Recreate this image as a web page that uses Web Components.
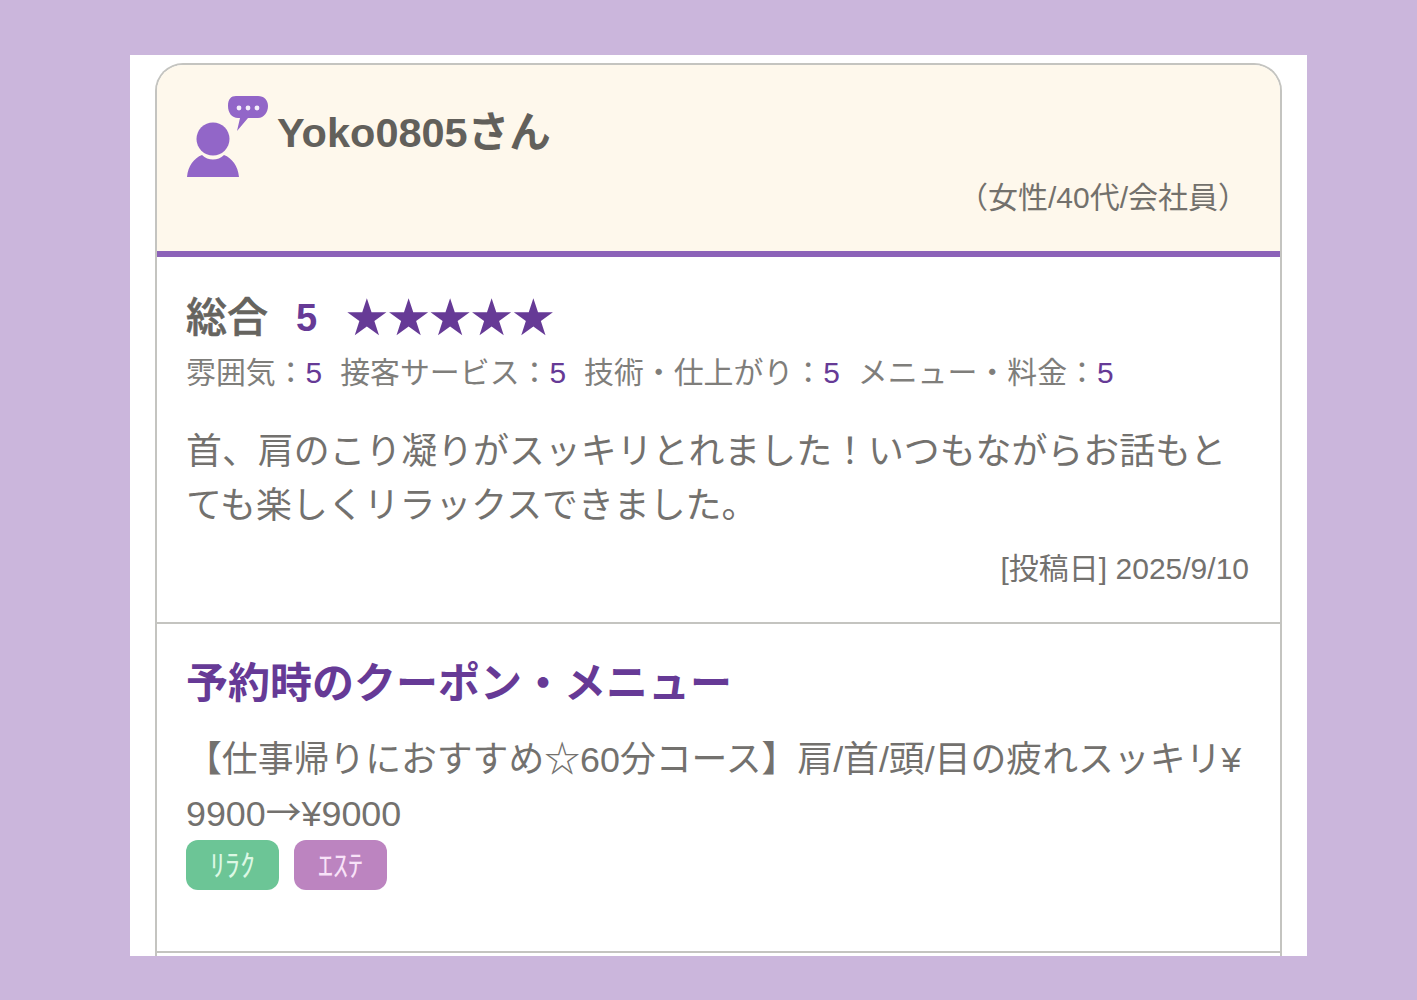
<!DOCTYPE html>
<html lang="ja">
<head>
<meta charset="utf-8">
<title>口コミ</title>
<style>
  html, body { margin: 0; padding: 0; }
  body {
    background: #cbb6dc;
    font-family: "Liberation Sans", "Noto Sans CJK JP", sans-serif;
    color: #6e6e6c;
  }
</style>
</head>
<body>
<review-page>
  <review-header name="Yoko0805さん" profile="（女性/40代/会社員）"></review-header>
  <review-body total="5" date="[投稿日] 2025/9/10">
    <review-score slot="scores" label="雰囲気：" value="5"></review-score>
    <review-score slot="scores" label="接客サービス：" value="5"></review-score>
    <review-score slot="scores" label="技術・仕上がり：" value="5"></review-score>
    <review-score slot="scores" label="メニュー・料金：" value="5"></review-score>
    首、肩のこり凝りがスッキリとれました！いつもながらお話もとても楽しくリラックスできました。
  </review-body>
  <review-coupon heading="予約時のクーポン・メニュー">
    【仕事帰りにおすすめ☆60分コース】肩/首/頭/目の疲れスッキリ¥<span>9900</span><span style="font-family: 'Noto Sans CJK JP', sans-serif; line-height: 0">→</span><span>¥9000</span>
    <genre-tag slot="tags" color="#6cc596" ink="#dcf8e4">ﾘﾗｸ</genre-tag>
    <genre-tag slot="tags" color="#bc84c0" ink="#f8e2f8">ｴｽﾃ</genre-tag>
  </review-coupon>
</review-page>

<script>
// Contenedor: fondo lila, panel blanco y tarjeta con borde
class ReviewPage extends HTMLElement {
  constructor() {
    super();
    this.attachShadow({ mode: 'open' });
    this.shadowRoot.innerHTML = `
      <style>
        :host { display: block; height: 1000px; padding: 55px 110px 44px 130px; box-sizing: border-box; overflow: hidden; }
        .panel { background: #fff; height: 901px; padding: 8px 25px 0 25px; box-sizing: border-box; overflow: hidden; }
        .card {
          height: 893px;
          box-sizing: border-box;
          border: 2px solid #c4c4c0;
          border-bottom: 0;
          border-radius: 28px 28px 0 0;
          overflow: hidden;
        }
      </style>
      <div class="panel"><div class="card"><slot></slot></div></div>
    `;
  }
}

// Cabecera con icono, nombre y perfil
class ReviewHeader extends HTMLElement {
  constructor() {
    super();
    this.attachShadow({ mode: 'open' });
  }

  connectedCallback() {
    this.shadowRoot.innerHTML = `
      <style>
        :host { display: block; background: #fef8ec; border-bottom: 6px solid #8c62b8; height: 192px; box-sizing: border-box; }
        .top { display: flex; align-items: flex-start; padding: 29px 0 0 30px; }
        svg { width: 82px; height: 84px; flex: none; }
        .name { margin: 12px 0 0 8px; font-size: 41.5px; line-height: 54px; font-weight: bold; color: #62605b; }
        .profile { margin: 0 32px 0 0; text-align: right; font-size: 30px; line-height: 40px; color: #73716c; }
      </style>
      <div class="top">
        <svg viewBox="0 0 82 84">
          <circle cx="26" cy="45" r="16.500" fill="#9266c8"/>
          <path fill="#9266c8" d="M0 83c1-11 7-19 15-22c6 6 16 6 22 0c8 3 14 11 15 22z"/>
          <path fill="#9266c8" d="M49 2h22c6 0 10 4 10 10s-4 12-10 12H61L50 37l3-13h-2c-6 0-10-5-10-12s3-10 8-10z"/>
          <circle cx="52" cy="14" r="2.400" fill="#f4eefa"/>
          <circle cx="61" cy="14" r="2.400" fill="#f4eefa"/>
          <circle cx="70" cy="14" r="2.400" fill="#f4eefa"/>
        </svg>
        <div class="name">${this.getAttribute('name')}</div>
      </div>
      <div class="profile">${this.getAttribute('profile')}</div>
    `;
  }
}

// Puntuación parcial: etiqueta + valor
class ReviewScore extends HTMLElement {
  constructor() {
    super();
    this.attachShadow({ mode: 'open' });
  }

  connectedCallback() {
    this.shadowRoot.innerHTML = `
      <style>
        :host { display: inline-block; white-space: nowrap; }
        b { font-weight: normal; color: #663a96; }
      </style>
      ${this.getAttribute('label')}<b>${this.getAttribute('value')}</b>
    `;
  }
}

// Bloque principal: total, estrellas, detalle, comentario y fecha
class ReviewBody extends HTMLElement {
  constructor() {
    super();
    this.attachShadow({ mode: 'open' });
  }

  connectedCallback() {
    const total = this.getAttribute('total');
    this.shadowRoot.innerHTML = `
      <style>
        :host { display: block; height: 367px; box-sizing: border-box; padding: 34px 31px 0 29px; border-bottom: 2px solid #c4c4c0; }
        .total { display: flex; align-items: center; height: 54px; font-size: 41px; color: #66645f; }
        .label { font-weight: 500; margin-bottom: 8px; -webkit-text-stroke: 0.6px #66645f; }
        .num { margin-left: 28px; font-weight: bold; font-size: 38px; color: #663a96; }
        .stars { margin-left: 29px; color: #663a96; font-family: "DejaVu Sans", sans-serif; display: flex; }
        .stars span { display: flex; justify-content: center; width: 41.6px; font-size: 51px; line-height: 54px; }
        .scores { display: flex; gap: 18px; margin-top: 8px; font-size: 29.9px; line-height: 40px; color: #7f7e7b; }
        .text { margin: 32px 0 0 0; font-size: 35.9px; line-height: 54px; color: #73716e; }
        .date { margin: 16px 0 0 0; text-align: right; font-size: 30px; line-height: 40px; color: #73716e; }
      </style>
      <div class="total"><span class="label">総合</span><span class="num">${total}</span><div class="stars">${'<span>★</span>'.repeat(total)}</div></div>
      <div class="scores"><slot name="scores"></slot></div>
      <div class="text"><slot></slot></div>
      <div class="date">${this.getAttribute('date')}</div>
    `;
  }
}

// Etiqueta de género
class GenreTag extends HTMLElement {
  constructor() {
    super();
    this.attachShadow({ mode: 'open' });
  }

  connectedCallback() {
    this.shadowRoot.innerHTML = `
      <style>
        :host {
          display: flex; align-items: center; justify-content: center;
          width: 93px; height: 50px; box-sizing: border-box;
          padding-bottom: 5px;
          border-radius: 12px;
          background: ${this.getAttribute('color')};
          color: ${this.getAttribute('ink')}; font-size: 30px;
        }
      </style>
      <slot></slot>
    `;
  }
}

// Bloque de cupón o menú reservado
class ReviewCoupon extends HTMLElement {
  constructor() {
    super();
    this.attachShadow({ mode: 'open' });
  }

  connectedCallback() {
    this.shadowRoot.innerHTML = `
      <style>
        :host { display: block; height: 329px; box-sizing: border-box; padding: 32px 30px 0 29px; border-bottom: 2px solid #c4c4c0; }
        h2 { margin: 0; font-size: 42px; line-height: 56px; font-weight: bold; color: #663a96; }
        .text { margin-top: 21px; font-size: 35.85px; line-height: 54px; color: #73716e; line-break: anywhere; }
        .tags { display: flex; gap: 15px; margin-top: -1px; }
      </style>
      <h2>${this.getAttribute('heading')}</h2>
      <div class="text"><slot></slot></div>
      <div class="tags"><slot name="tags"></slot></div>
    `;
  }
}

customElements.define('review-page', ReviewPage);
customElements.define('review-header', ReviewHeader);
customElements.define('review-score', ReviewScore);
customElements.define('review-body', ReviewBody);
customElements.define('genre-tag', GenreTag);
customElements.define('review-coupon', ReviewCoupon);
</script>
</body>
</html>
